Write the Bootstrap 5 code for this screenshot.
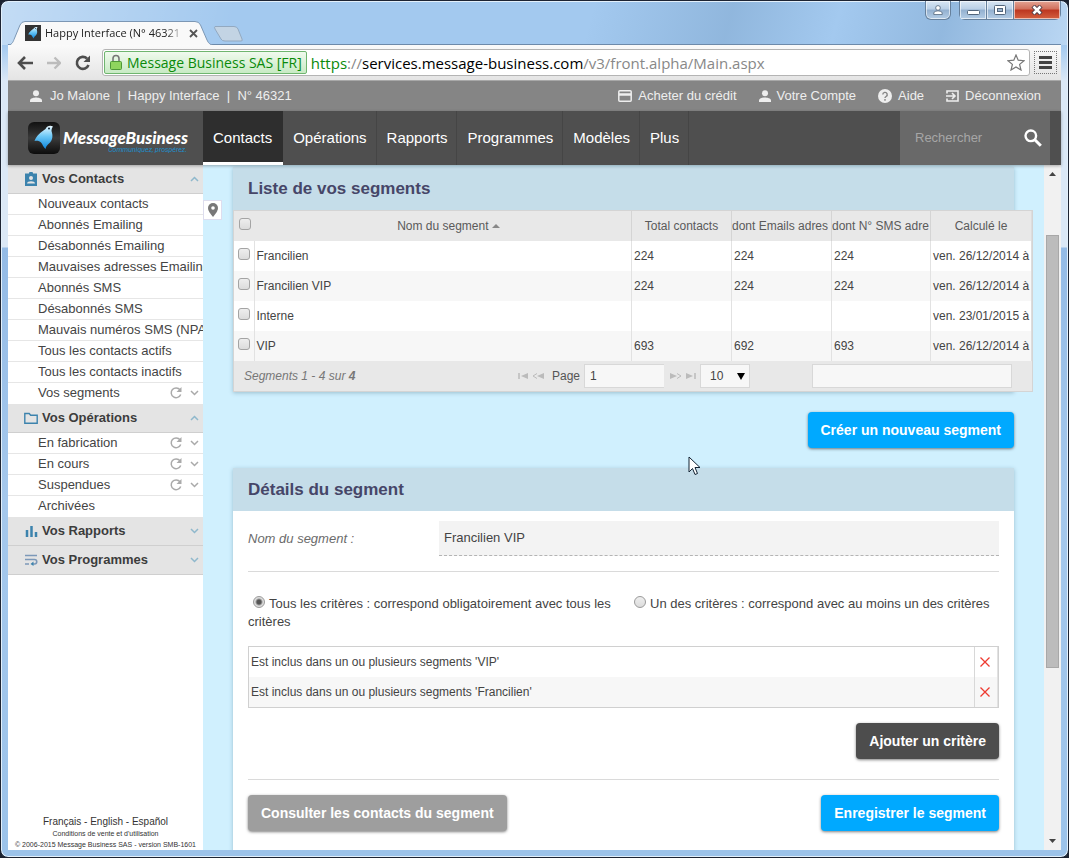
<!DOCTYPE html>
<html lang="fr">
<head>
<meta charset="utf-8">
<meta name="viewport" content="width=device-width, initial-scale=1">
<title>Happy Interface (N° 46321)</title>
<link href="https://cdn.jsdelivr.net/npm/bootstrap@5.3.0/dist/css/bootstrap.min.css" rel="stylesheet">
<script src="https://cdn.jsdelivr.net/npm/bootstrap@5.3.0/dist/js/bootstrap.bundle.min.js"></script>
<style>
  body { font-family: "Liberation Sans", Arial, sans-serif; font-size: 13px; line-height: 18px; color: #444; background: #1b2230; }
  a { color: inherit; text-decoration: none; }
  button { border: 0; background: none; padding: 0; color: inherit; }
  svg { display: block; flex: none; }

  /* browser window */
  .win { border: 1px solid #1d2433; border-radius: 8px; padding: 0 7px 7px; overflow: hidden;
    background: linear-gradient(105deg, rgba(255,255,255,.35) 0, rgba(255,255,255,0) 22%, rgba(255,255,255,0) 55%, rgba(70,110,150,.2) 68%, rgba(255,255,255,0) 78%, rgba(70,110,150,.18) 88%, rgba(255,255,255,.25) 100%) 0 0 / 100% 44px no-repeat,
      linear-gradient(#a3c9ef 0, #a3c9ef 44px, #dbe8f6 80px, #dbe8f6 246px, #94bbe6 247px, #a5c8ec 500px, #9cc3ea 100%);
    box-shadow: inset 0 0 0 1px #e3f0fb; }
  .titlebar { height: 43px; }
  .tab-page { height: 24px; width: 194px; margin: 20px 0 0 1px; padding-left: 16px; }
  .tab-shape { position: absolute; left: -2px; top: 0; }
  .tab-title { font: 11px/16px "Open Sans", "Noto Sans", sans-serif; color: #222; width: 140px; white-space: nowrap; overflow: hidden;
    -webkit-mask-image: linear-gradient(90deg, #000 86%, transparent); mask-image: linear-gradient(90deg, #000 86%, transparent); }
  .win-btn { height: 19px; border: 1px solid #66809c; border-top: 0; background: linear-gradient(#d8e6f4 0, #b9cfe6 45%, #93b0cf 50%, #b4cde6 100%); box-shadow: inset 0 0 0 1px rgba(255,255,255,.6); }
  .win-btn + .win-btn { border-left: 0; }
  .win-close { background: linear-gradient(#e4a494 0, #d1705c 45%, #bc3620 50%, #d4603f 100%); }
  .toolbar { height: 37px; background: linear-gradient(#fafafa, #e4e4e4); border-top: 1px solid #6d8aaa; border-bottom: 1px solid #a8a8a8; padding: 0 4px 0 9px; }
  .nav-keys { gap: 14px; margin-right: 11px; }
  .omni { height: 27px; border: 1px solid #b4b4b4; border-radius: 3px; background: #fff; padding-left: 1px; }
  .omni { font: 15px/22px "Open Sans", "Noto Sans", sans-serif; }
  .cert { height: 23px; border: 1px solid #6fb56f; border-radius: 2px; background: linear-gradient(#f0faee, #c8eac4); color: #0a8a0a; font-size: 14px; }
  .menu-btn { width: 23px; height: 23px; border: 1px dotted #777; }

  /* application bars */
  .topbar { height: 30px; background: #858585; color: #eee; font-size: 13px; padding: 0 20px 0 22px; }
  .topbar nav { gap: 22px; }
  .topbar nav a { gap: 6px; }
  .mainnav { height: 54px; background: #4f4f4f; box-shadow: 0 1px 3px rgba(0,0,0,.3); z-index: 2; }
  .brand-box { width: 195px; padding-left: 20px; }
  .brand-name { font: italic 900 17px/20px Lato, "Liberation Sans", sans-serif; color: #fff; }
  .brand-tag { font: italic 7px/8px Roboto, "Liberation Sans", sans-serif; color: #1e8fcd; right: 1px; top: 18px; }
  .mainnav .nav-link { color: #fff; font-size: 15px; line-height: 20px; padding: 17px 9px 17px 10px; border-right: 1px solid #454545; }
  .mainnav .nav-link.active { background: #2e2e2e; border-right: 0; padding-right: 11px; box-shadow: inset 0 -3px #fff; }
  .find { width: 150px; background: #696969; margin-right: 11px; padding: 0 8px 0 15px; }
  .find input { color: #fff; font-size: 13px; }
  .find input::placeholder { color: #a6a6a6; opacity: 1; }
  input.bare { border: 0; background: none; outline: 0; padding: 0; min-width: 0; }

  /* sidebar */
  .side { width: 195px; background: #fff; overflow: hidden; z-index: 1; }
  .side-head { height: 29px; background: #e4e4e4; border-bottom: 1px solid #cfcfcf; padding: 0 4px 0 16px; font-size: 13px; font-weight: bold; color: #3c3c3c; }
  .side-item { height: 21px; border-bottom: 1px solid #e6e6e6; padding: 0 4px 0 30px; font-size: 13px; line-height: 20px; white-space: nowrap; }
  .side-item:last-child { border-bottom: 0; }
  .side-item > span { height: 20px; color: #aaa; }
  .legal { font: 7px/11px "Liberation Sans", sans-serif; white-space: nowrap; color: #333; }
  .langs { font: 10px/12px "Liberation Sans", sans-serif; }

  /* content */
  .content { background: #d0f0fe; overflow: hidden; padding: 2px 30px 0; min-width: 0; }
  .pin { width: 19px; height: 20px; left: 0; top: 35px; background: #fff; border: 1px solid #dde; }
  .panel { box-shadow: 0 1px 4px rgba(90,130,150,.45); background: #fff; }
  .panel-head { height: 43px; background: #c5dde9; color: #464668; font-size: 17px; line-height: 43px; font-weight: bold; padding-left: 15px; margin: 0; }
  .grid-wrap { margin-right: -19px; border: 1px solid #d4d4d4; background: #e8e8e8; }
  .grid-wrap table { table-layout: fixed; width: 100%; font-size: 12px; color: #444; border-right: 1px solid #ddd; }
  .grid-wrap th { height: 30px; padding: 0; font-weight: normal; text-align: center; color: #5a5a5a; border-right: 1px solid #d4d4d4; background: #e8e8e8; overflow: hidden; white-space: nowrap; }
  .grid-wrap th:nth-child(2) { padding-left: 12px; }
  .grid-wrap th:first-child, .grid-wrap th:last-child { border-right: 0; }
  .grid-wrap td { height: 30px; padding: 0 2px; border-right: 1px solid #e2e2e2; overflow: hidden; white-space: nowrap; background: #fff; }
  .grid-wrap td:last-child { border-right: 0; padding-right: 0; }
  tr:nth-child(even) > td { background: #f7f7f7 !important; }
  .tick { appearance: none; width: 12px; height: 12px; border: 1px solid #a4a4a4; border-radius: 3px; background: linear-gradient(#eee, #dcdcdc); display: block; margin: 0 0 5px 2px; }
  th .tick { margin-left: 5px; }
  .pager { height: 30px; font-size: 12px; color: #555; padding: 0 20px 0 10px; }
  .pager input, .pager select { appearance: none; height: 24px; border: 1px solid #d8d8d8; background: #f7f7f7; font-size: 12px; color: #444; padding: 0 5px; border-radius: 0; }
  .pager select { width: 50px; padding: 0 9px; display: block; }
  .pager .go { width: 80px; border-right: 0; margin-right: 2px; }
  .pager .filter { width: 200px; margin-left: 58px; }
  .arrow-dn { border: 4px solid transparent; border-top: 7px solid #000; border-bottom: 0; right: 5px; top: 9px; pointer-events: none; }
  .sort-up { display: inline-block; border: 4px solid transparent; border-bottom-color: #888; border-top: 0; vertical-align: 2px; }
  .act { height: 36px; border-radius: 4px; padding: 0 13px; font-size: 14px; line-height: 36px; font-weight: bold; color: #fff; box-shadow: 0 1px 3px rgba(0,0,0,.5); }
  .act-blue { background: #00a9ff; }
  .act-dark { background: #4d4d4d; }
  .act-grey { background: #9e9e9e; }
  .rule { border: 0; border-top: 1px solid #dadada; opacity: 1; margin: 0; }
  .seg-name { height: 35px; background: #f3f3f3; border: 0; border-bottom: 1px dashed #b4b4b4; padding: 0 5px 2px; font-size: 13px; color: #444; outline: 0; }
  .seg-label { width: 191px; font-style: italic; color: #6b6b6b; }
  .dot { appearance: none; width: 12px; height: 12px; border: 1px solid #9a9a9a; border-radius: 50%; background: linear-gradient(#eee, #dcdcdc); margin: 0 4px 0 5px; vertical-align: 0; }
  .dot:checked { background: radial-gradient(circle, #555 0 2px, #ddd 4px); }
  .modes { margin-bottom: 15px; }
  .crit { border: 1px solid #d0d0d0; border-collapse: separate; border-spacing: 0; font-size: 12px; width: 100%; }
  .crit td { height: 30px; padding: 0 2px; background: #fff; }
  .crit td.del { width: 24px; border-left: 1px solid #d8d8d8; border-right: 1px solid #e2e2e2; padding: 0 4px; color: #ee3a30; }
  .track { width: 17px; background: #f1f1f1; }
  .thumb { background: #bcbcbc; border: 1px solid #a8a8a8; flex: 433; margin: 0 2px; }
  .pointer { left: 485px; top: 291px; }
</style>
</head>
<body>
<svg width="0" height="0" class="position-absolute" aria-hidden="true">
  <defs>
    <symbol id="user" viewBox="0 0 12 12"><circle cx="6" cy="3.2" r="3" fill="currentColor"/><path d="M0 12V10.5C0 8.3 4 7.5 6 7.5s6 .8 6 3V12z" fill="currentColor"/></symbol>
    <symbol id="reload" viewBox="0 0 12 12"><path d="M10 2.8A4.9 4.9 0 1 0 10.700 7.500" fill="none" stroke="currentColor" stroke-width="1.500"/><path d="M11.500 0v5H6.500z" fill="currentColor"/></symbol>
    <symbol id="down" viewBox="0 0 9 6"><path d="M1 1l3.500 3.500L8 1" fill="none" stroke="currentColor" stroke-width="1.500"/></symbol>
    <symbol id="up" viewBox="0 0 9 6"><path d="M1 5l3.500-3.500L8 5" fill="none" stroke="currentColor" stroke-width="1.500"/></symbol>
    <symbol id="cross" viewBox="0 0 12 12"><path d="M1.500 1.500l9 9M10.500 1.500l-9 9" fill="none" stroke="currentColor" stroke-width="1.300"/></symbol>
    <linearGradient id="sky" x2="0" y2="1"><stop stop-color="#e8f8ff"/><stop offset=".45" stop-color="#6cc8f6"/><stop offset="1" stop-color="#0d86dc"/></linearGradient>
    <linearGradient id="ink" x2="0" y2="1"><stop stop-color="#111"/><stop offset=".5" stop-color="#3a3a3a"/><stop offset="1" stop-color="#0c0c0c"/></linearGradient>
    <symbol id="bird" viewBox="0 0 32 32"><path d="M25 4.500c-3-1.500-6-.5-7.500 2.500C13 10 8 14 6.500 19c3-.5 5 0 6.500 1.500 1.500 1.500 2 4 4.500 6.500.5-3 2-4 3.500-5.500 4-3.500 4-8 2.500-12.500 0-2 .5-3 1.500-4.500z" fill="url(#sky)"/><circle cx="21" cy="6.500" r="1" fill="#123"/></symbol>
  </defs>
</svg>

<div class="win vh-100 d-flex flex-column position-relative">
  <div class="titlebar d-flex align-items-start">
    <div class="tab-page position-relative d-flex align-items-center gap-1">
      <svg class="tab-shape" width="236" height="24" viewBox="0 0 236 24"><path d="M0 24.500C5 24 6 21 7 18.500L13 4Q14.500.5 18 .5H188Q192 .5 193.500 4L200 19Q202 24 207 24.500z" fill="#f9f9f9" stroke="#7c97b4"/><path d="M208 5.500H227Q230 5.500 231 8L235 18Q236 20 234 20H218Q215 20 214 18L208 8Q207 5.500 208 5.500z" fill="#c3d4e4" stroke="#93a9c0"/></svg>
      <svg class="position-relative" width="16" height="16"><rect width="16" height="16" fill="#333"/><use href="#bird"/></svg>
      <span class="tab-title position-relative">Happy Interface (N° 46321</span>
      <button class="position-relative" aria-label="Fermer l'onglet"><svg width="9" height="9" viewBox="0 0 9 9"><path d="M1 1l7 7M8 1L1 8" stroke="#555" stroke-width="1.800"/></svg></button>
    </div>
    <div class="ms-auto d-flex gap-2">
      <button class="win-btn d-flex justify-content-center align-items-center rounded-bottom" style="width:26px" aria-label="Profil"><svg width="10" height="10" viewBox="0 0 12 12" stroke="#53667c"><circle cx="6" cy="3.500" r="2.800" fill="#fff"/><path d="M1 11.500V9q2-2 5-2t5 2v2.500z" fill="#fff"/></svg></button>
      <div class="d-flex rounded-bottom overflow-hidden">
        <button class="win-btn d-flex justify-content-center align-items-center" style="width:28px" aria-label="Réduire"><svg width="13" height="10"><rect x=".5" y="5.500" width="12" height="4" rx="1" fill="#fff" stroke="#53667c"/></svg></button>
        <button class="win-btn d-flex justify-content-center align-items-center" style="width:27px" aria-label="Agrandir"><svg width="12" height="10"><rect x=".5" y=".5" width="11" height="9" rx="1" fill="#fff" stroke="#53667c"/><rect x="3.500" y="3.500" width="5" height="3" fill="#9db6d0" stroke="#53667c"/></svg></button>
        <button class="win-btn win-close d-flex justify-content-center align-items-center" style="width:47px" aria-label="Fermer"><svg width="12" height="10" viewBox="0 0 12 10"><path d="M2 1l8 8M10 1L2 9" stroke="#53404a" stroke-width="4.500"/><path d="M2.500 1.500l7 7M9.500 1.500l-7 7" stroke="#fff" stroke-width="2.500"/></svg></button>
      </div>
    </div>
  </div>
  <div class="toolbar d-flex align-items-center flex-shrink-0">
    <div class="nav-keys d-flex">
      <button aria-label="Précédent"><svg width="16" height="16" viewBox="1 0 16 16"><path d="M9 2L3 8l6 6M3.500 8H17" fill="none" stroke="#4d4d4d" stroke-width="2.600"/></svg></button>
      <button aria-label="Suivant"><svg width="14" height="16" viewBox="1 0 14 16"><path d="M8.500 2.500L14 8l-5.500 5.500M13 8H1" fill="none" stroke="#bcbcbc" stroke-width="2.300"/></svg></button>
      <button aria-label="Actualiser"><svg width="16" height="16" viewBox="1 0 16 16"><path d="M13 3.500A6 6 0 1 0 14.500 10" fill="none" stroke="#4d4d4d" stroke-width="2.600"/><path d="M16 .5v6.500H9.500z" fill="#4d4d4d"/></svg></button>
    </div>
    <div class="omni flex-fill d-flex align-items-center">
      <span class="cert d-flex align-items-center px-1 text-nowrap"><svg class="me-1" width="14" height="17" viewBox="0 0 13 17"><path d="M3.500 8V4.500a3 3 0 0 1 6 0V8" fill="none" stroke="#777" stroke-width="1.600"/><rect x="1" y="7.500" width="11" height="8" rx="1" fill="#8fd45e" stroke="#4f9838"/></svg>Message Business SAS [FR]</span>
      <div class="ms-1 flex-fill text-nowrap" style="color:#888"><span style="color:#0a8a0a">https</span>://<span class="text-black">services.message-business.com</span>/v3/front.alpha/Main.aspx</div>
      <button class="me-1" aria-label="Favori"><svg width="18" height="17" viewBox="0 0 18 17"><path d="M9 1l2.200 5.200 5.800.5-4.400 3.700 1.400 5.600L9 13l-5 3 1.400-5.600L1 6.700l5.800-.5z" fill="#fff" stroke="#777" stroke-width="1.200"/></svg></button>
    </div>
    <button class="menu-btn d-flex justify-content-center align-items-center ms-1" aria-label="Menu"><svg width="13" height="13"><path d="M0 1.500h13M0 6.500h13M0 11.500h13" stroke="#444" stroke-width="3"/></svg></button>
  </div>

  <div class="topbar d-flex align-items-center flex-shrink-0">
    <svg width="12" height="12" class="me-2"><use href="#user"/></svg><span style="white-space:pre">Jo Malone  |  Happy Interface  |  N° 46321</span>
    <nav class="ms-auto d-flex text-nowrap">
      <a href="#" class="d-flex align-items-center"><svg width="14" height="12" viewBox="0 0 14 12"><rect x=".8" y=".8" width="12.400" height="10.400" rx="1" fill="none" stroke="#eee" stroke-width="1.500"/><path d="M1 4.500h12" stroke="#eee" stroke-width="2.500"/></svg>Acheter du crédit</a>
      <a href="#" class="d-flex align-items-center"><svg width="12" height="12"><use href="#user"/></svg>Votre Compte</a>
      <a href="#" class="d-flex align-items-center"><svg width="14" height="14"><circle cx="7" cy="7" r="7" fill="#eee"/><path d="M4.800 5.600a2.200 2.200 0 1 1 3.300 1.900Q7 8.200 7 9M7 10v1.700" fill="none" stroke="#858585" stroke-width="1.400"/></svg>Aide</a>
      <a href="#" class="d-flex align-items-center"><svg width="13" height="12" viewBox="0 0 13 12"><path d="M1 3.500V1h11v10H1V8.500" fill="none" stroke="#eee" stroke-width="1.600"/><path d="M0 6h8M6 3l3 3-3 3" fill="none" stroke="#eee" stroke-width="1.600"/></svg>Déconnexion</a>
    </nav>
  </div>
  <div class="mainnav d-flex flex-shrink-0 position-relative">
    <a href="#" class="brand-box d-flex align-items-center">
      <svg width="32" height="32" style="margin-right:3px"><rect width="32" height="32" rx="6" fill="url(#ink)"/><use href="#bird"/></svg>
      <span class="position-relative brand-name">MessageBusiness<span class="brand-tag position-absolute text-nowrap">Communiquez, prospérez.</span></span>
    </a>
    <nav class="nav flex-nowrap">
      <a class="nav-link active" href="#">Contacts</a><a class="nav-link" href="#">Opérations</a><a class="nav-link" href="#">Rapports</a><a class="nav-link" href="#">Programmes</a><a class="nav-link" href="#">Modèles</a><a class="nav-link" href="#">Plus</a>
    </nav>
    <form class="find ms-auto d-flex align-items-center">
      <input class="bare flex-fill" type="search" placeholder="Rechercher" aria-label="Rechercher">
      <button type="button" aria-label="Lancer la recherche"><svg width="18" height="18" viewBox="0 0 18 18"><circle cx="6.800" cy="6.800" r="5.300" fill="none" stroke="#fff" stroke-width="2.400"/><path d="M10.800 10.800l6 6" stroke="#fff" stroke-width="3"/></svg></button>
    </form>
  </div>

  <div class="d-flex flex-fill" style="min-height:0">
    <aside class="side d-flex flex-column flex-shrink-0">
      <a href="#" class="side-head d-flex align-items-center"><svg width="14" height="14" class="me-1" viewBox="0 0 14 14"><path d="M1 1.500h4a2 2 0 0 1 4 0h4V14H1z" fill="#3c83ad"/><circle cx="7" cy="6" r="2" fill="#e4e4e4"/><path d="M3 11.500c0-3 8-3 8 0z" fill="#e4e4e4"/></svg>Vos Contacts<svg width="9" height="6" class="ms-auto" style="color:#8fb8cc"><use href="#up"/></svg></a>
      <div>
        <a href="#" class="side-item d-block">Nouveaux contacts</a>
        <a href="#" class="side-item d-block">Abonnés Emailing</a>
        <a href="#" class="side-item d-block">Désabonnés Emailing</a>
        <a href="#" class="side-item d-block">Mauvaises adresses Emailing</a>
        <a href="#" class="side-item d-block">Abonnés SMS</a>
        <a href="#" class="side-item d-block">Désabonnés SMS</a>
        <a href="#" class="side-item d-block">Mauvais numéros SMS (NPA)</a>
        <a href="#" class="side-item d-block">Tous les contacts actifs</a>
        <a href="#" class="side-item d-block">Tous les contacts inactifs</a>
        <a href="#" class="side-item d-flex">Vos segments<span class="ms-auto d-flex align-items-center gap-2"><svg width="12" height="12"><use href="#reload"/></svg><svg width="9" height="6"><use href="#down"/></svg></span></a>
      </div>
      <a href="#" class="side-head d-flex align-items-center"><svg width="14" height="12" class="me-1" viewBox="0 0 14 12"><path d="M.8 10.500v-9h4.400l1.500 1.700h6.500v8H.8z" fill="none" stroke="#3c83ad" stroke-width="1.400"/></svg>Vos Opérations<svg width="9" height="6" class="ms-auto" style="color:#8fb8cc"><use href="#up"/></svg></a>
      <div>
        <a href="#" class="side-item d-flex">En fabrication<span class="ms-auto d-flex align-items-center gap-2"><svg width="12" height="12"><use href="#reload"/></svg><svg width="9" height="6"><use href="#down"/></svg></span></a>
        <a href="#" class="side-item d-flex">En cours<span class="ms-auto d-flex align-items-center gap-2"><svg width="12" height="12"><use href="#reload"/></svg><svg width="9" height="6"><use href="#down"/></svg></span></a>
        <a href="#" class="side-item d-flex">Suspendues<span class="ms-auto d-flex align-items-center gap-2"><svg width="12" height="12"><use href="#reload"/></svg><svg width="9" height="6"><use href="#down"/></svg></span></a>
        <a href="#" class="side-item d-block">Archivées</a>
      </div>
      <a href="#" class="side-head d-flex align-items-center"><svg width="14" height="12" class="me-1"><path d="M3 5v7M7.500 1v11M12 7v5" stroke="#3c83ad" stroke-width="2.500"/></svg>Vos Rapports<svg width="9" height="6" class="ms-auto" style="color:#8fb8cc"><use href="#down"/></svg></a>
      <a href="#" class="side-head d-flex align-items-center"><svg width="14" height="12" class="me-1" viewBox="0 0 14 12"><path d="M1 1.500h12M1 5.500h9.500a2 2 0 0 1 0 4.500H8M1 10h4" fill="none" stroke="#7c98b8" stroke-width="1.600"/><path d="M9.500 7.500v4.500L6.500 10z" fill="#3c83ad"/></svg>Vos Programmes<svg width="9" height="6" class="ms-auto" style="color:#8fb8cc"><use href="#down"/></svg></a>
      <footer class="legal mt-auto text-center">
        <div class="langs"><a href="#">Français</a> - <a href="#">English</a> - <a href="#">Español</a></div>
        <a href="#">Conditions de vente et d'utilisation</a>
        <div>© 2006-2015 Message Business SAS - version SMB-1601</div>
      </footer>
    </aside>

    <main class="content flex-fill position-relative">
      <button class="pin position-absolute d-flex justify-content-center align-items-center" aria-label="Épingler"><svg width="10" height="14" viewBox="0 0 10 14"><path d="M5 0a5 5 0 0 1 5 5c0 3.500-5 9-5 9S0 8.500 0 5a5 5 0 0 1 5-5z" fill="#777"/><circle cx="5" cy="5" r="1.800" fill="#fff"/></svg></button>
      <section class="panel">
        <h2 class="panel-head">Liste de vos segments</h2>
        <div class="grid-wrap position-relative">
          <table>
            <colgroup><col style="width:20px"><col><col style="width:100px"><col style="width:100px"><col style="width:99px"><col style="width:101px"></colgroup>
            <thead><tr><th><input class="tick" type="checkbox" aria-label="Tout sélectionner"></th><th>Nom du segment <span class="sort-up"></span></th><th>Total contacts</th><th class="text-start">dont Emails adres</th><th class="text-start">dont N° SMS adre</th><th>Calculé le</th></tr></thead>
            <tbody>
              <tr><td><input class="tick" type="checkbox" aria-label="Francilien"></td><td>Francilien</td><td>224</td><td>224</td><td>224</td><td>ven. 26/12/2014 à</td></tr>
              <tr><td><input class="tick" type="checkbox" aria-label="Francilien VIP"></td><td>Francilien VIP</td><td>224</td><td>224</td><td>224</td><td>ven. 26/12/2014 à</td></tr>
              <tr><td><input class="tick" type="checkbox" aria-label="Interne"></td><td>Interne</td><td></td><td></td><td></td><td>ven. 23/01/2015 à</td></tr>
              <tr><td><input class="tick" type="checkbox" aria-label="VIP"></td><td>VIP</td><td>693</td><td>692</td><td>693</td><td>ven. 26/12/2014 à</td></tr>
            </tbody>
          </table>
          <div class="pager d-flex align-items-center gap-1">
            <em class="me-auto" style="color:#777">Segments 1 - 4 sur <b>4</b></em>
            <button aria-label="Première page"><svg width="10" height="8"><path d="M1 1v6" stroke="#bbb" stroke-width="1.500"/><path d="M10 1v6L3 4z" fill="#bbb"/></svg></button>
            <button class="me-1" aria-label="Page précédente"><svg width="12" height="8"><path d="M5 1.500L1 4l4 2.500" fill="none" stroke="#bbb"/><path d="M12 1v6L5 4z" fill="#bbb"/></svg></button>
            <label for="page">Page</label>
            <input id="page" class="go" value="1">
            <button aria-label="Page suivante"><svg width="12" height="8"><path d="M7 1.500L11 4 7 6.500" fill="none" stroke="#bbb"/><path d="M0 1v6l7-3z" fill="#bbb"/></svg></button>
            <button aria-label="Dernière page"><svg width="10" height="8"><path d="M9 1v6" stroke="#bbb" stroke-width="1.500"/><path d="M0 1v6l7-3z" fill="#bbb"/></svg></button>
            <span class="position-relative"><select aria-label="Lignes par page"><option>10</option><option>20</option></select><span class="arrow-dn position-absolute"></span></span>
            <input class="filter" aria-label="Filtrer">
          </div>
        </div>
      </section>
      <div class="d-flex justify-content-end" style="padding:20px 0"><button class="act act-blue">Créer un nouveau segment</button></div>

      <section class="panel">
        <h2 class="panel-head">Détails du segment</h2>
        <div style="padding:10px 15px 40px">
          <div class="d-flex align-items-center">
            <label for="seg" class="seg-label">Nom du segment :</label>
            <input id="seg" class="seg-name flex-fill" value="Francilien VIP">
          </div>
          <hr class="rule" style="margin:15px 0 23px">
          <div class="modes d-flex">
            <label style="width:381px"><input class="dot" type="radio" name="mode" checked>Tous les critères : correspond obligatoirement avec tous les critères</label>
            <label class="flex-fill"><input class="dot" type="radio" name="mode">Un des critères : correspond avec au moins un des critères</label>
          </div>
          <table class="crit">
            <tbody>
              <tr><td>Est inclus dans un ou plusieurs segments 'VIP'</td><td class="del"><button class="d-block" aria-label="Supprimer"><svg width="12" height="12"><use href="#cross"/></svg></button></td></tr>
              <tr><td>Est inclus dans un ou plusieurs segments 'Francilien'</td><td class="del"><button class="d-block" aria-label="Supprimer"><svg width="12" height="12"><use href="#cross"/></svg></button></td></tr>
            </tbody>
          </table>
          <div class="d-flex justify-content-end" style="padding:15px 0 20px"><button class="act act-dark">Ajouter un critère</button></div>
          <hr class="rule" style="margin-bottom:15px">
          <div class="d-flex justify-content-between"><button class="act act-grey">Consulter les contacts du segment</button><button class="act act-blue">Enregistrer le segment</button></div>
        </div>
      </section>
      <svg class="pointer position-absolute" width="13" height="20" viewBox="0 0 13 20"><path d="M1 1v15l3.500-3.500L7 18.500l2.500-1L7 11.500h5z" fill="#fff" stroke="#123" stroke-width="1"/></svg>
    </main>
    <div class="track d-flex flex-column flex-shrink-0" aria-hidden="true">
      <svg width="17" height="17"><path d="M5 11h7l-3.500-4z" fill="#444"/></svg>
      <div style="flex:53"></div><div class="thumb"></div><div style="flex:166"></div>
      <svg width="17" height="17"><path d="M5 6h7l-3.500 4z" fill="#444"/></svg>
    </div>
  </div>
</div>
</body>
</html>
